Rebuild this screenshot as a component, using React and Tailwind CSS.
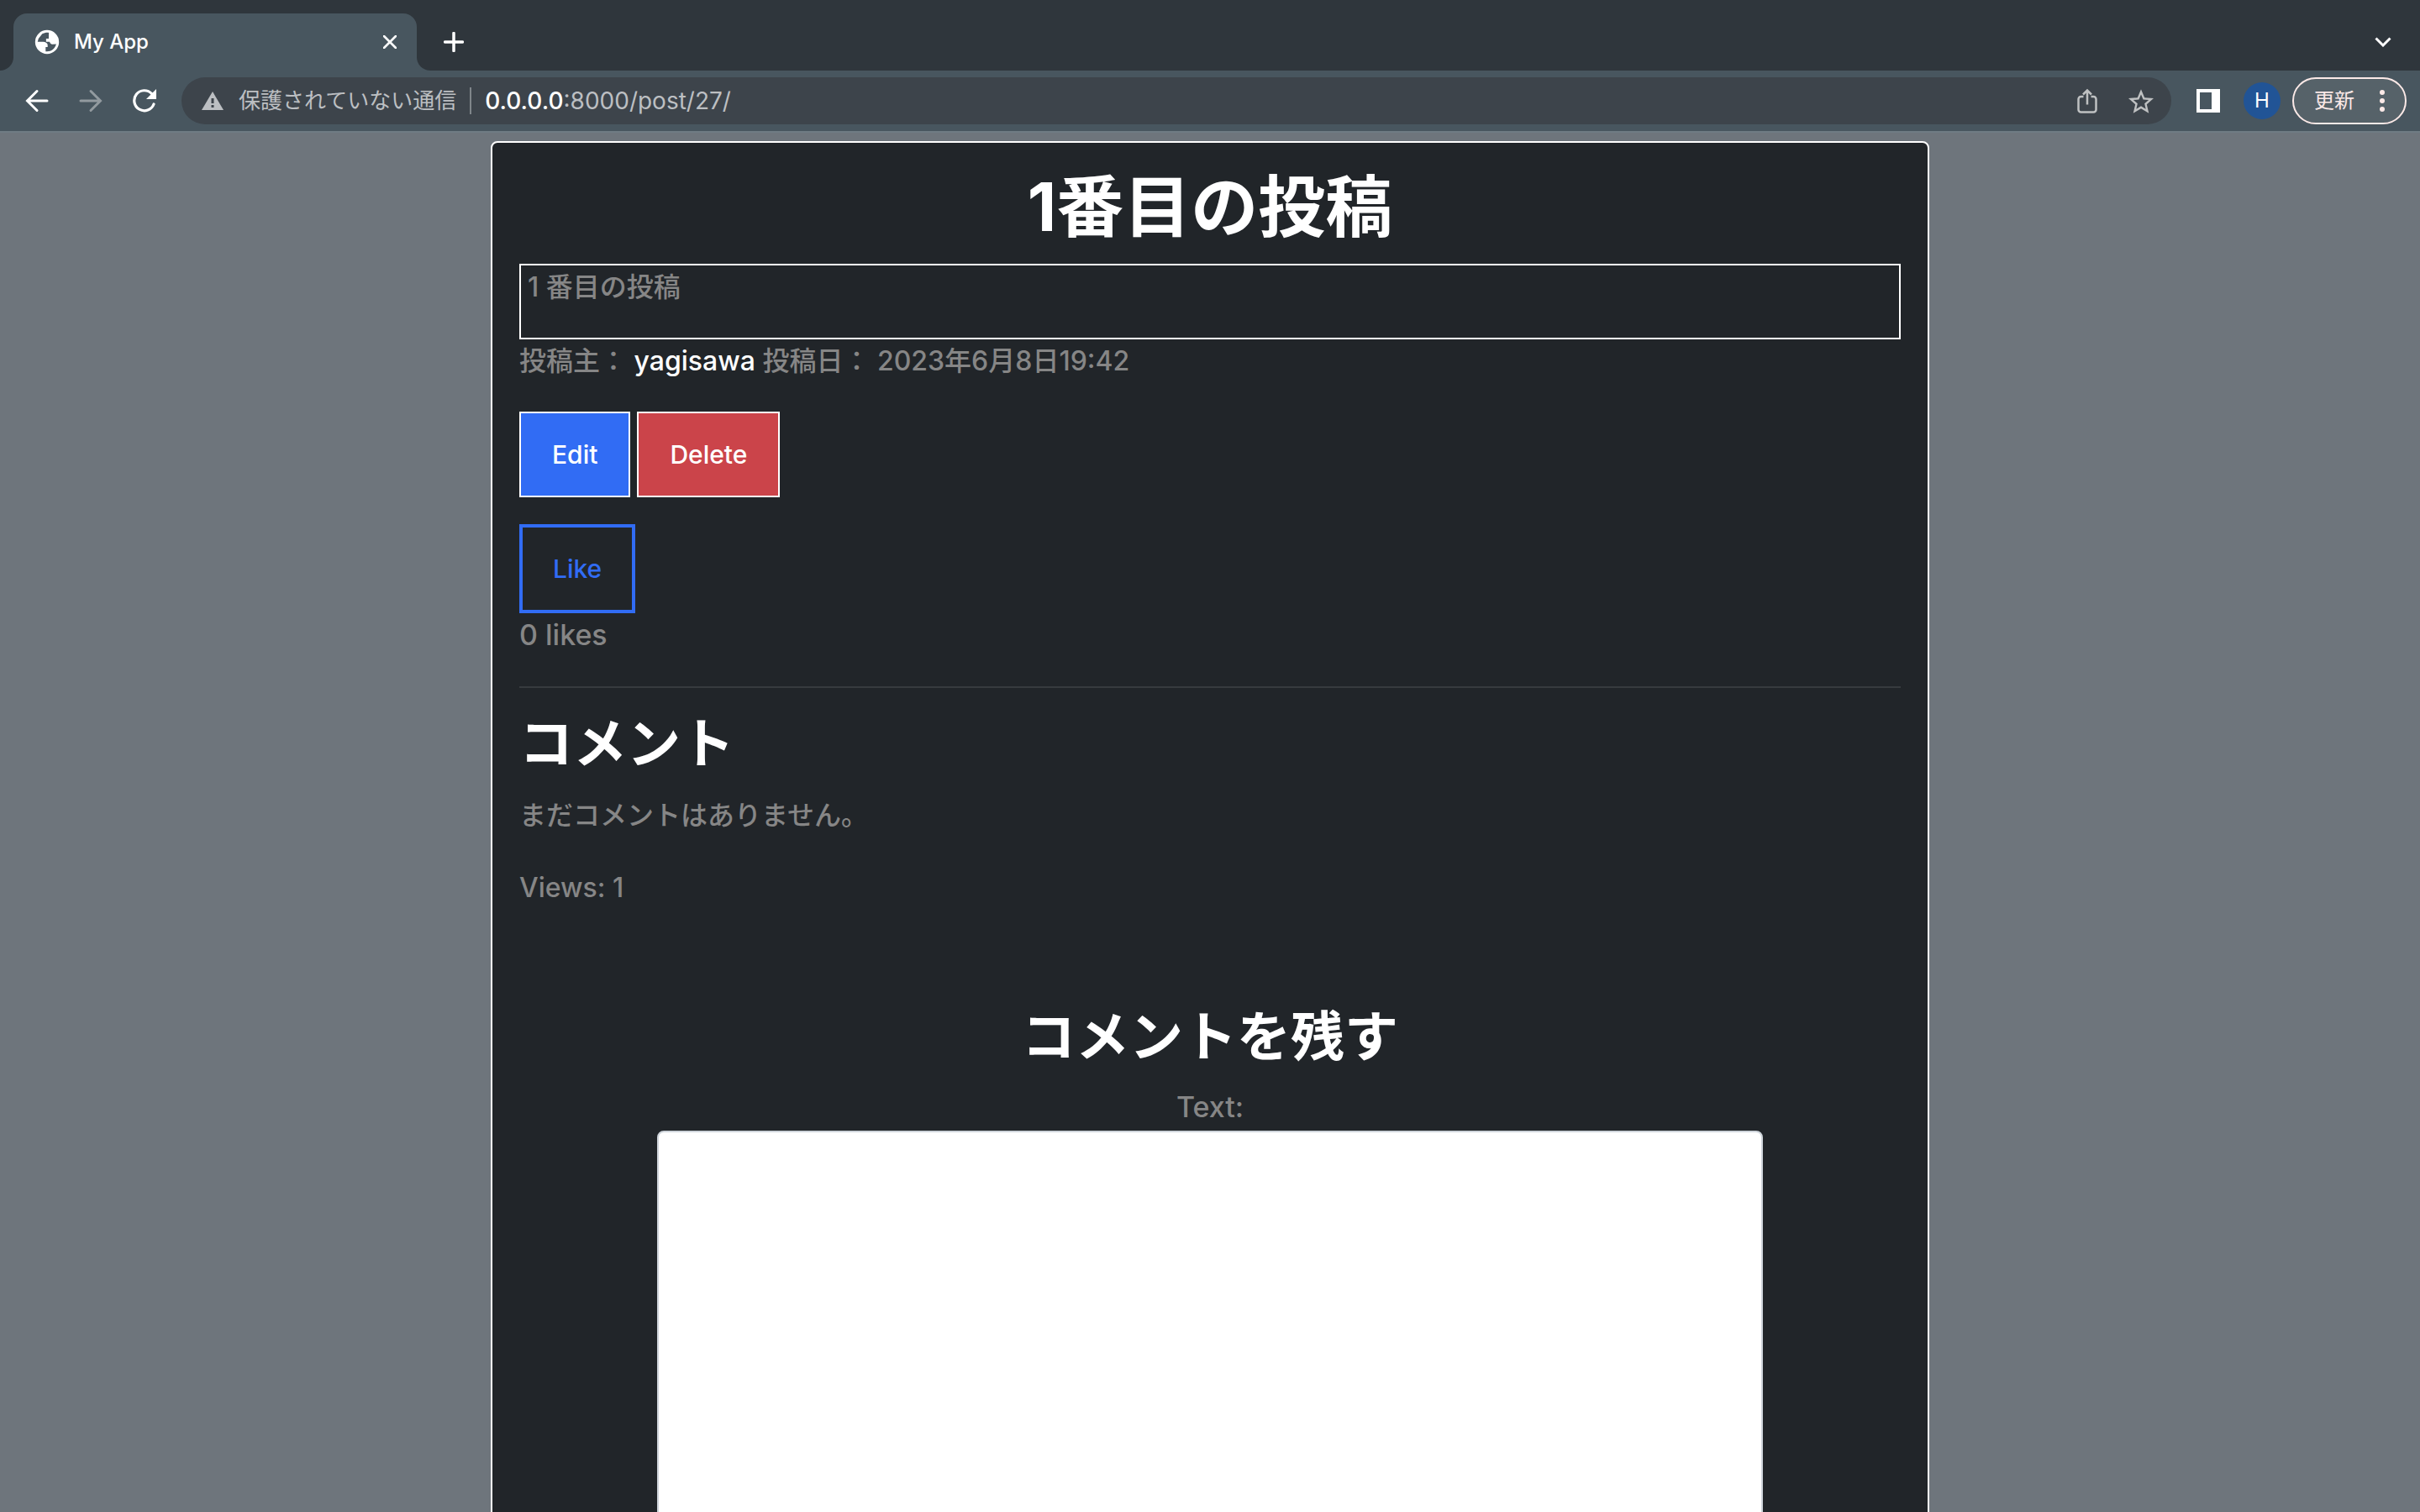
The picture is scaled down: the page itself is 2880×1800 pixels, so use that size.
import React from "react";

function Globe() {
  return (
    <svg viewBox="0 0 24 24" className="size-[34px] shrink-0" aria-hidden="true">
      <circle cx="12" cy="12" r="10" fill="#fff" />
      <path
        fill="#48565f"
        d="M13.500 4.200C11.800 3.900 9.500 4.300 8 5.200L4.800 9.200l-.8 2.900h5.400c1.900 0 3.100.9 3.100 2.500v1.600h-1.700v3.700c4.200.6 7.600-1.900 8.900-6.100l-3.300.1c-1.200 0-1.900-.7-2.200-2h-3V9.100h2.200z"
      />
      <path fill="#fff" d="M3.500 11.800h5.300c1.800 0 2.600 1 2.600 2.300v1.400h-1.500v4.700l-3.900-2z" />
    </svg>
  );
}

export default function App() {
  return (
    <div className="flex h-screen flex-col overflow-hidden bg-[#6e757c] font-['Inter','Noto_Sans_CJK_JP',sans-serif]">
      <header className="shrink-0">
        <div className="flex h-[84px] items-end bg-[#2f363c]">
          <div className="size-4 bg-[#48565f]">
            <div className="size-4 rounded-br-2xl bg-[#2f363c]" />
          </div>
          <div className="flex h-[68px] w-[480px] items-center rounded-t-2xl bg-[#48565f] pr-4 pl-[23px] text-white">
            <Globe />
            <span className="ml-[15px] flex-1 text-[24px] leading-8 font-medium">My App</span>
            <button aria-label="Close tab" className="flex size-8 items-center justify-center">
              <svg viewBox="0 0 16 16" className="size-4" stroke="#fff" strokeWidth="2.600" strokeLinecap="round">
                <path d="M1 1l14 14M15 1L1 15" />
              </svg>
            </button>
          </div>
          <div className="size-4 bg-[#48565f]">
            <div className="size-4 rounded-bl-2xl bg-[#2f363c]" />
          </div>
          <button aria-label="New tab" className="ml-2 flex h-[68px] w-10 items-center justify-center">
            <svg viewBox="0 0 24 24" className="size-6" stroke="#fff" strokeWidth="3.500" strokeLinecap="round">
              <path d="M12 1.500v21M1.500 12h21" />
            </svg>
          </button>
          <button aria-label="Search tabs" className="mr-6 ml-auto flex h-[68px] w-10 items-center justify-center">
            <svg viewBox="0 0 20 12" className="h-3 w-5" fill="none" stroke="#fff" strokeWidth="3">
              <path d="M1.500 1.500L10 10l8.500-8.500" />
            </svg>
          </button>
        </div>

        <div className="flex h-[72px] items-center bg-[#48565f] pr-4 pl-6">
          <button aria-label="Back" className="flex size-10 items-center justify-center">
            <svg viewBox="0 0 28 28" className="size-7" fill="none" stroke="#fff" strokeWidth="3" strokeLinecap="round">
              <path d="M26 14H3M14 2.500L2.500 14 14 25.500" />
            </svg>
          </button>
          <button aria-label="Forward" className="ml-6 flex size-10 items-center justify-center">
            <svg viewBox="0 0 28 28" className="size-7" fill="none" stroke="#929a9f" strokeWidth="3" strokeLinecap="round">
              <path d="M2 14h23M14 2.500L25.500 14 14 25.500" />
            </svg>
          </button>
          <button aria-label="Reload" className="ml-6 flex size-10 items-center justify-center">
            <svg viewBox="0 0 28 28" className="size-7" fill="none" stroke="#fff" strokeWidth="3.200">
              <path d="M25 18A12 12 0 1 1 22.500 5.500" strokeLinecap="round" />
              <path d="M28 0v12H16z" fill="#fff" stroke="none" />
            </svg>
          </button>
          <div className="ml-6 flex h-14 flex-1 items-center rounded-full bg-[#3d444b] pr-5 pl-6">
            <svg viewBox="0 0 26 22" className="h-[22px] w-[26px] shrink-0" aria-hidden="true">
              <path fill="#bcbfc2" d="M13 0l13 22H0z" />
              <path fill="#3d444b" d="M11.500 8h3v6h-3zM11.500 16h3v3h-3z" />
            </svg>
            <span className="ml-[18px] text-[26px] leading-8 whitespace-nowrap text-[#bcbfc2]">保護されていない通信</span>
            <span className="mx-4 h-8 w-0.5 bg-[#7f858a]" />
            <div className="flex-1 text-[28px] leading-8 text-[#bcbfc2]">
              <span className="font-medium text-white">0.0.0.0</span>:8000/post/27/
            </div>
            <button aria-label="Share" className="flex size-8 items-center justify-center">
              <svg viewBox="0 0 24 30" className="h-[30px] w-6" fill="none" stroke="#bfc1c2" strokeWidth="2.500">
                <path d="M7.500 10H4.500a3 3 0 0 0-3 3v12.500a3 3 0 0 0 3 3h15a3 3 0 0 0 3-3V13a3 3 0 0 0-3-3h-3M12 19.500V3M7 7.500l5-5 5 5" />
              </svg>
            </button>
            <button aria-label="Bookmark" className="ml-8 flex size-8 items-center justify-center">
              <svg viewBox="2 2 20 19" className="h-[29px] w-[30px]" fill="#bfc1c2">
                <path d="M22 9.240l-7.190-.62L12 2 9.190 8.630 2 9.240l5.460 4.730L5.820 21 12 17.270 18.180 21l-1.630-7.030L22 9.240zM12 15.400l-3.760 2.270 1-4.280-3.320-2.880 4.380-.38L12 6.100l1.710 4.040 4.380.38-3.320 2.880 1 4.280L12 15.400z" />
              </svg>
            </button>
          </div>
          <button aria-label="Side panel" className="ml-[30px] box-border size-7 border-4 border-r-[10px] border-white" />
          <button aria-label="Profile" className="ml-7 flex size-11 items-center justify-center rounded-full bg-[#215496] text-[24px] text-white">H</button>
          <button className="ml-3.5 flex h-14 w-[136px] items-center justify-between rounded-full border-2 border-[#fbe9e7] bg-[#566269] pr-6 pl-6 text-[24px] text-[#fbe9e7]">
            <span>更新</span>
            <svg viewBox="0 0 6 26" className="h-[26px] w-1.5" fill="#fbe9e7" aria-hidden="true">
              <circle cx="3" cy="3" r="3" />
              <circle cx="3" cy="13" r="3" />
              <circle cx="3" cy="23" r="3" />
            </svg>
          </button>
        </div>
        <div className="h-0.5 bg-[#6f7c84]" />
      </header>

      <main className="min-h-0 flex-1 overflow-hidden pt-2.5">
        <article className="mx-auto w-full max-w-[1712px] rounded-lg border-2 border-white bg-[#212529] px-8 py-7 text-[32px] leading-[48px] font-medium text-[#868686]">
          <h1 className="mb-5 text-center text-[80px] leading-[96px] font-bold text-white">1番目の投稿</h1>
          <div className="border-2 border-white px-2 pt-0.5 pb-9">1 番目の投稿</div>
          <p className="mt-0.5">
            投稿主： <a href="#author" className="text-white">yagisawa</a> 投稿日： 2023年6月8日19:42
          </p>
          <div className="mt-9 flex gap-2 text-[30px] text-white">
            <button className="h-[102px] border-2 border-white bg-[#316cf4] px-[37px]">Edit</button>
            <button className="h-[102px] border-2 border-white bg-[#cb444a] px-[37px]">Delete</button>
          </div>
          <button className="mt-8 block h-[106px] border-4 border-[#316cf4] px-9 text-[30px] text-[#316cf4]">Like</button>
          <p className="mt-0.5 text-[34px]">0 likes</p>
          <hr className="mt-[37px] mb-7 border-t-2 border-[#373b3e]" />
          <h2 className="text-[64px] leading-[76px] font-bold text-white">コメント</h2>
          <p className="mt-6">まだコメントはありません。</p>
          <p className="mt-[38px]">Views: 1</p>
          <form className="mt-[115px] flex flex-col items-center">
            <h2 className="text-[64px] leading-[76px] font-bold text-white">コメントを残す</h2>
            <label htmlFor="comment" className="mt-[22px] text-[34px]">Text:</label>
            <textarea id="comment" rows={12} className="mt-1 w-4/5 resize-none rounded-lg border-2 border-[#ced4da] bg-white p-4 text-[#212529]" />
          </form>
        </article>
      </main>
    </div>
  );
}
